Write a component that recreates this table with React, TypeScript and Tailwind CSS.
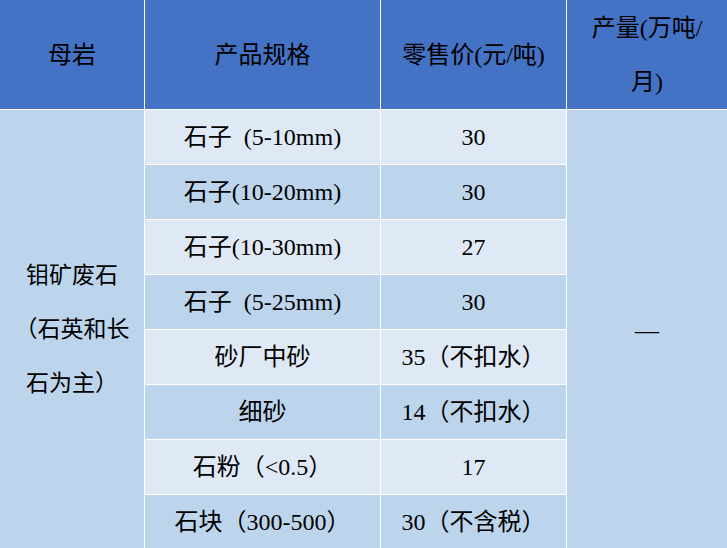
const rows = [
  { spec: "石子  (5-10mm)", price: "30" },
  { spec: "石子(10-20mm)", price: "30" },
  { spec: "石子(10-30mm)", price: "27" },
  { spec: "石子  (5-25mm)", price: "30" },
  { spec: "砂厂中砂", price: "35（不扣水）" },
  { spec: "细砂", price: "14（不扣水）" },
  { spec: "石粉（<0.5）", price: "17" },
  { spec: "石块（300-500）", price: "30（不含税）" },
];

export default function App() {
  return (
    <div className="h-[548px] w-[727px] overflow-hidden bg-white font-['Liberation_Serif','Noto_Sans_CJK_SC',serif]">
      <div className="grid grid-cols-[144px_235px_185px_160px] grid-rows-[109px_repeat(8,54px)] gap-px bg-white text-black">
        {/* Header */}
        <div className="flex items-center justify-center bg-[#4472c4] text-[24px]">母岩</div>
        <div className="flex items-center justify-center bg-[#4472c4] text-[24px]">产品规格</div>
        <div className="flex items-center justify-center bg-[#4472c4] text-[24px]">零售价(元/吨)</div>
        <div className="flex items-center justify-center bg-[#4472c4] px-3 text-center text-[24px] leading-[54px]">
          产量(万吨/
          <br />
          月)
        </div>

        {/* Parent rock, spans all body rows */}
        <div className="col-start-1 row-span-8 row-start-2 flex items-center justify-center bg-[#bdd5ec] text-center text-[23px] leading-[54px]">
          <div>
            钼矿废石
            <br />
            （石英和长
            <br />
            石为主）
          </div>
        </div>

        {rows.map((r, i) => {
          const bg = i % 2 === 0 ? "bg-[#dfe9f5]" : "bg-[#bdd5ec]";
          return [
            <div
              key={`s${i}`}
              className={`col-start-2 flex items-center justify-center whitespace-pre text-[24px] ${bg}`}
              style={{ gridRowStart: i + 2 }}
            >
              {r.spec}
            </div>,
            <div
              key={`p${i}`}
              className={`col-start-3 flex items-center justify-center text-[24px] ${bg}`}
              style={{ gridRowStart: i + 2 }}
            >
              {r.price}
            </div>,
          ];
        })}

        {/* Output, spans all body rows */}
        <div className="col-start-4 row-span-8 row-start-2 flex items-center justify-center bg-[#bdd5ec] text-[24px]">
          —
        </div>
      </div>
    </div>
  );
}
